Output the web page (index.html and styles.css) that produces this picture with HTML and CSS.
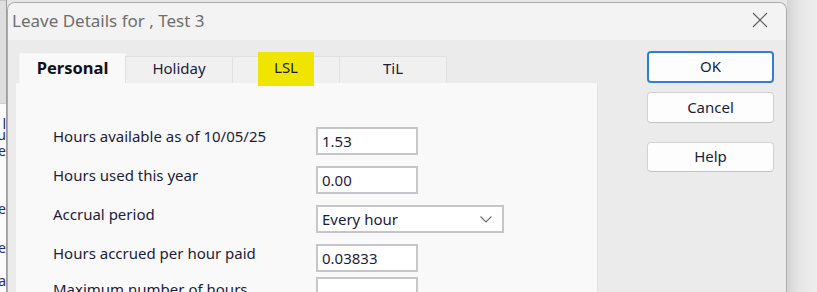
FILE: index.html
```html
<!DOCTYPE html>
<html lang="en">
<head>
  <meta charset="UTF-8">
  <meta name="viewport" content="width=device-width, initial-scale=1.0">
  <title>Leave Details</title>
  <link rel="stylesheet" href="styles.css">
</head>
<body>
  <div class="screen">
    <div class="behind">
      <div class="behind-top"></div>
      <div class="behind-list">
        <span class="b1">l</span>
        <span class="b2">u</span>
        <span class="b3">re</span>
        <span class="b4">e</span>
        <span class="b5">e</span>
        <span class="b6">a:</span>
      </div>
    </div>

    <div class="dialog">
      <div class="titlebar">
        <span class="title">Leave Details for , Test 3</span>
        <span class="close">
          <svg width="16" height="16" viewBox="0 0 16 16"><path d="M1 1L15 15M15 1L1 15" stroke="#5a5a5a" stroke-width="1.1" fill="none"/></svg>
        </span>
      </div>

      <div class="content">
        <div class="tabbed">
          <div class="tabs">
            <div class="tab active">Personal</div>
            <div class="tab">Holiday</div>
            <div class="tab"><span class="hl">LSL</span></div>
            <div class="tab">TiL</div>
          </div>
          <div class="panel">
            <div class="form">
              <label>Hours available as of 10/05/25</label>
              <div class="field">1.53</div>

              <label>Hours used this year</label>
              <div class="field">0.00</div>

              <label>Accrual period</label>
              <div class="field select">
                <span>Every hour</span>
                <svg width="12" height="7" viewBox="0 0 12 7"><path d="M0.5 0.5L6 6L11.5 0.5" stroke="#6e6e6e" stroke-width="1.1" fill="none"/></svg>
              </div>

              <label>Hours accrued per hour paid</label>
              <div class="field">0.03833</div>

              <label class="last">Maximum number of hours</label>
              <div class="field last"></div>
            </div>
          </div>
        </div>

        <div class="actions">
          <button class="btn default">OK</button>
          <button class="btn">Cancel</button>
          <button class="btn help">Help</button>
        </div>
      </div>
    </div>

    <div class="shadow"></div>
  </div>
</body>
</html>
```

FILE: styles.css
```css
* {
  box-sizing: border-box;
  margin: 0;
  padding: 0;
}
body {
  background-color: #e6e6e6;
  font-family: "Noto Sans", "Open Sans", sans-serif;
  color: #1c1c3c;
  overflow: hidden;
}
.screen {
  display: flex;
  height: 292px;
  overflow: hidden;
}

/* window behind the dialog */
.behind {
  width: 7px;
  flex-shrink: 0;
  display: flex;
  flex-direction: column;
  border-right: 1px solid #9c9c9c;
}
.behind-top {
  height: 104px;
  flex-shrink: 0;
  background-color: #dedede;
  border-bottom: 1px solid #d0d0d0;
  box-shadow: inset 0 17px 0 -16px #c4c4c4, inset 0 43px 0 -42px #c4c4c4;
}
.behind-list {
  flex: 1;
  background-color: #fafafa;
  overflow: hidden;
  font-size: 14px;
  color: #2a2a6a;
}
.behind-list span {
  display: block;
  text-align: right;
  white-space: nowrap;
  direction: rtl;
  line-height: 10px;
}
.b1 { margin-top: 15px; }
.b2 { margin-top: 1px; }
.b3 { margin-top: 6px; }
.b4 { margin-top: 48px; }
.b5 { margin-top: 29px; }
.b6 { margin-top: 23px; }

/* dialog */
.dialog {
  width: 780px;
  flex-shrink: 0;
  margin-top: 2px;
  border: 1px solid #ababab;
  border-bottom: none;
  border-radius: 8px 8px 0 0;
  display: flex;
  flex-direction: column;
  overflow: hidden;
}
.titlebar {
  height: 37px;
  flex-shrink: 0;
  background-color: #f3f3f3;
  display: flex;
  align-items: center;
  justify-content: space-between;
  padding: 0 18px 0 4px;
}
.title {
  font-size: 17px;
  color: #6e6e6e;
  margin-top: -2px;
}
.close {
  display: flex;
  margin-top: -3px;
}
.content {
  flex: 1;
  min-height: 0;
  display: flex;
  align-items: flex-start;
  background-color: #ebebeb;
  padding: 13px 0 0 8px;
}
.tabbed {
  width: 582px;
  flex-shrink: 0;
  align-self: stretch;
  display: flex;
  flex-direction: column;
}
.tabs {
  display: flex;
  flex-shrink: 0;
  align-items: flex-end;
  height: 30px;
  padding-left: 3px;
  position: relative;
  z-index: 1;
}
.tab {
  width: 108px;
  height: 27px;
  display: flex;
  align-items: center;
  justify-content: center;
  background-color: #f0f0f0;
  border: 1px solid #e1e1e1;
  border-bottom: none;
  margin-left: -1px;
  padding-bottom: 5px;
  font-size: 15px;
  color: #1c1c3c;
}
.tab.active {
  width: 107px;
  height: 30px;
  margin-left: 0;
  background-color: #f9f9f9;
  border-color: #f4f4f4;
  font-weight: bold;
  font-size: 16.5px;
  color: #101020;
  padding-bottom: 2px;
}
.hl {
  display: block;
  flex-shrink: 0;
  width: 56px;
  height: 34px;
  line-height: 30px;
  text-align: center;
  background-color: #f0e500;
  margin-top: 2px;
  color: #1c1c1c;
}
.panel {
  flex: 1;
  min-height: 260px;
  background-color: #f9f9f9;
  border-right: 1px solid #e3e3e3;
  padding: 44px 0 0 37px;
}
.form {
  display: grid;
  grid-template-columns: 263px auto;
  row-gap: 11px;
  align-items: start;
}
.form label {
  font-size: 15px;
  line-height: 20px;
  margin-top: -1px;
}
.field {
  width: 102px;
  height: 28px;
  background-color: #fff;
  border: 2px solid #c6c6ca;
  font-size: 15px;
  line-height: 24px;
  padding: 0 4px;
  color: #1c1c3c;
}
.field.select {
  width: 188px;
  display: flex;
  align-items: center;
  justify-content: space-between;
  padding-right: 10px;
}
.form .last {
  margin-top: -6px;
}
.form label.last {
  margin-top: -4px;
}

/* buttons */
.actions {
  margin-left: 49px;
  margin-top: -2px;
  width: 127px;
  flex-shrink: 0;
  display: flex;
  flex-direction: column;
}
.btn {
  height: 31px;
  background-color: #fdfdfd;
  border: 1px solid #d2d2d2;
  border-bottom-color: #c2c2c2;
  border-radius: 4px;
  font-family: inherit;
  font-size: 15px;
  color: #1c1c3c;
  padding-bottom: 2px;
}
.btn.default {
  height: 32px;
  border: 2px solid #2f80d4;
  margin-bottom: 9px;
}
.btn.help {
  height: 30px;
  margin-top: 19px;
}

.shadow {
  flex: 1;
  background: linear-gradient(to right, #d4d4d4, #e6e6e6 12px, #eeeeee);
}
```
